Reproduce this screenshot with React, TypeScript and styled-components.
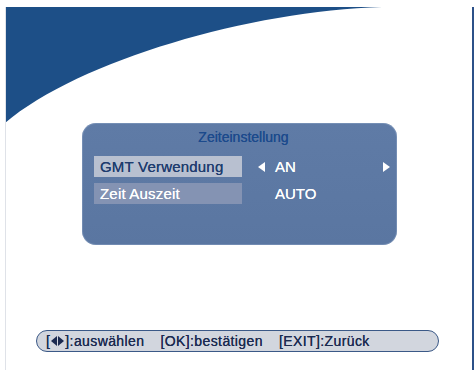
import React from 'react';
import styled, { createGlobalStyle } from 'styled-components';

const GlobalStyle = createGlobalStyle`
	html, body {
		margin: 0;
		padding: 0;
		background: #ffffff;
	}
	body {
		font-family: 'Liberation Sans', Arial, sans-serif;
	}
`;

const Screen = styled.div`
	position: relative;
	width: 476px;
	height: 370px;
	overflow: hidden;
	background: #ffffff;
	padding-top: 7px;
	padding-left: 5px;
	box-sizing: border-box;
`;

const Swoosh = styled.svg`
	position: absolute;
	left: 0;
	top: 0;
	width: 476px;
	height: 370px;
`;

const Frame = styled.div`
	position: relative;
	width: 469px;
	height: 363px;
	box-sizing: border-box;
	border-left: 1px solid #dfe2e8;
	border-right: 2px solid #2c5189;
	padding-top: 116px;
	display: flex;
	flex-direction: column;
`;

const Panel = styled.div`
	margin-left: 76px;
	width: 315px;
	height: 122px;
	box-sizing: border-box;
	border-radius: 14px;
	background: linear-gradient(180deg, #5f7ba6 0%, #5a76a1 100%);
	box-shadow: inset 0 0 0 1px rgba(160, 180, 210, 0.35);
	padding: 5px 7px 0 12px;
	text-shadow: 0 0 0.6px currentColor;
`;

const Title = styled.div`
	text-align: center;
	color: #1c4a8c;
	font-size: 14px;
	line-height: 18px;
	padding-left: 3px;
	margin-bottom: 10px;
`;

const Row = styled.div`
	display: grid;
	grid-template-columns: 148px 1fr;
	column-gap: 16px;
	align-items: center;
	height: 21px;
	margin-bottom: 6px;
`;

const Label = styled.div<{ $active?: boolean }>`
	height: 21px;
	box-sizing: border-box;
	padding-left: 6px;
	font-size: 15px;
	line-height: 21px;
	letter-spacing: 0.2px;
	background: ${({ $active }) => ($active ? '#b8c0d0' : '#8493b3')};
	color: ${({ $active }) => ($active ? '#1f3c6e' : '#ffffff')};
`;

const Value = styled.div`
	display: flex;
	align-items: center;
	color: #ffffff;
	font-size: 15px;
	line-height: 21px;
`;

const ValueText = styled.span`
	flex: 1;
	padding-left: 10px;
`;

const ArrowSlot = styled.span`
	display: inline-flex;
	width: 7px;
	justify-content: center;
`;

const Footer = styled.div`
	margin-top: 85px;
	margin-left: 30px;
	width: 403px;
	height: 22px;
	box-sizing: border-box;
	border: 1.5px solid #3b5987;
	border-radius: 11px;
	background: #d2d6de;
	display: flex;
	align-items: center;
	gap: 16px;
	padding-left: 9px;
	color: #1b2a50;
	font-size: 14px;
	letter-spacing: 0.4px;
	white-space: pre;
	text-shadow: 0 0 0.5px currentColor;
`;

const Hint = styled.span`
	display: inline-flex;
	align-items: center;
`;

const KeyArrows = styled.span`
	display: inline-flex;
	align-items: center;
	gap: 1px;
	margin: 0 1px;
`;

function Tri({ dir, w = 7, h = 10, color = '#ffffff' }: { dir: 'left' | 'right'; w?: number; h?: number; color?: string }) {
	const pts = dir === 'left' ? '7,0 7,10 0,5' : '0,0 0,10 7,5';
	return (
		<svg width={w} height={h} viewBox="0 0 7 10" preserveAspectRatio="none">
			<polygon points={pts} fill={color} />
		</svg>
	);
}

export default function App() {
	return (
		<>
			<GlobalStyle />
			<Screen>
				<Swoosh viewBox="0 0 476 370">
					<path d="M5,7 L382,7 C250,11 80,60 5,123 Z" fill="#1d4f87" />
				</Swoosh>
				<Frame>
					<Panel>
						<Title>Zeiteinstellung</Title>
						<Row>
							<Label $active>GMT Verwendung</Label>
							<Value>
								<ArrowSlot>
									<Tri dir="left" />
								</ArrowSlot>
								<ValueText>AN</ValueText>
								<ArrowSlot>
									<Tri dir="right" />
								</ArrowSlot>
							</Value>
						</Row>
						<Row>
							<Label>Zeit Auszeit</Label>
							<Value>
								<ArrowSlot />
								<ValueText>AUTO</ValueText>
							</Value>
						</Row>
					</Panel>
					<Footer>
						<Hint>
							[
							<KeyArrows>
								<Tri dir="left" w={6} h={10} color="#1b2a50" />
								<Tri dir="right" w={6} h={10} color="#1b2a50" />
							</KeyArrows>
							]:auswählen
						</Hint>
						<Hint>[OK]:bestätigen</Hint>
						<Hint>[EXIT]:Zurück</Hint>
					</Footer>
				</Frame>
			</Screen>
		</>
	);
}
